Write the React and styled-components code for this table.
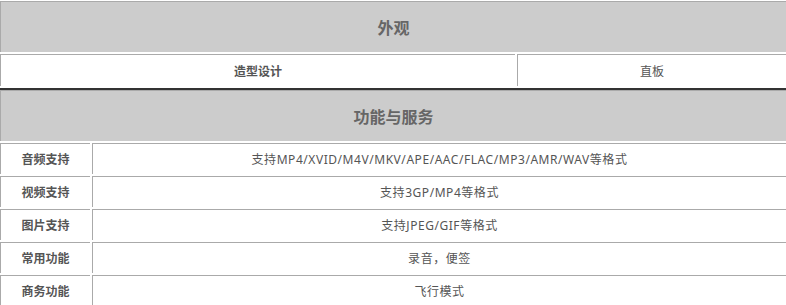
import React from 'react'
import styled, { createGlobalStyle } from 'styled-components'

const GlobalStyle = createGlobalStyle`
  body {
    margin: 0;
    background: #ffffff;
    font-family: "Noto Sans", "Noto Sans CJK SC", sans-serif;
  }
`

const Page = styled.div`
  width: 786px;
  padding-top: 1px;
`

const Section = styled.div`
  display: grid;
  grid-template-columns: ${p => p.$cols};
  gap: 2px;
  ${p => p.$divider && `
    padding-bottom: 2px;
    border-bottom: 2px solid #333333;
  `}
`

const Cell = styled.div`
  box-sizing: border-box;
  display: flex;
  align-items: center;
  justify-content: center;
  border-top: 1px solid #aaaaaa;
  border-left: 1px solid #aaaaaa;
  height: ${p => p.$h || 31}px;
  font-size: 12px;
  color: #555555;
  white-space: nowrap;
`

const Title = styled(Cell)`
  grid-column: 1 / -1;
  height: 51px;
  background: #cccccc;
  font-size: 16px;
  font-weight: bold;
  color: #666666;
`

const Label = styled(Cell)`
  font-weight: bold;
`

const Value = styled(Cell)`
  letter-spacing: 0.55px;
`

const services = [
  ['音频支持', '支持MP4/XVID/M4V/MKV/APE/AAC/FLAC/MP3/AMR/WAV等格式'],
  ['视频支持', '支持3GP/MP4等格式'],
  ['图片支持', '支持JPEG/GIF等格式'],
  ['常用功能', '录音，便签'],
  ['商务功能', '飞行模式'],
]

const App = () => {
  return (<Page>
    <GlobalStyle />
    <Section $cols='515px 1fr' $divider>
      <Title>外观</Title>
      <Label $h={32}>造型设计</Label>
      <Cell $h={32}>直板</Cell>
    </Section>
    <Section $cols='90px 1fr'>
      <Title>功能与服务</Title>
      {services.map(([name, value]) => (
        <React.Fragment key={name}>
          <Label>{name}</Label>
          <Value>{value}</Value>
        </React.Fragment>
      ))}
    </Section>
  </Page>)
}

export default App
